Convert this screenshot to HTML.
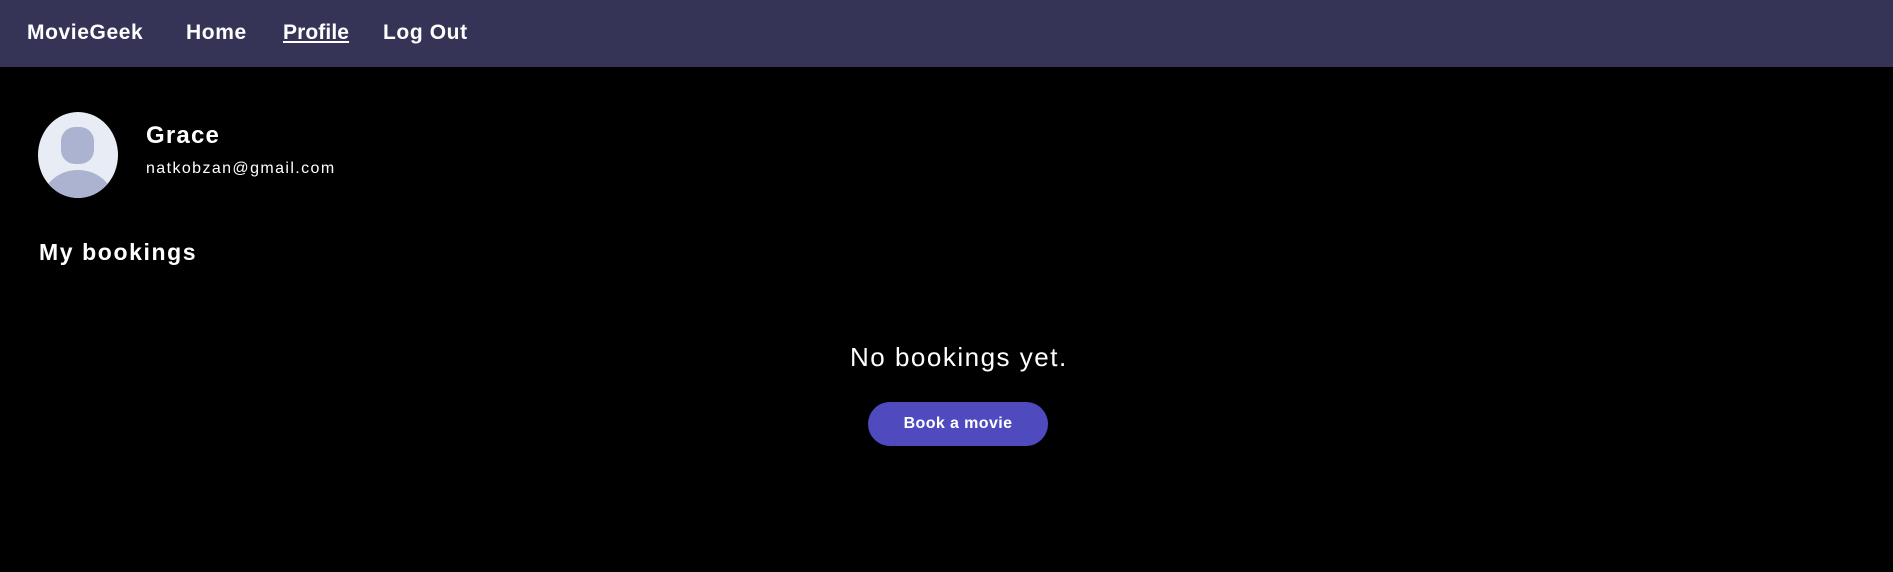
<!DOCTYPE html>
<html><head><meta charset="utf-8"><style>
*{margin:0;padding:0;box-sizing:border-box}
body{width:1893px;height:572px;background:#000;font-family:"Liberation Sans",sans-serif;color:#fff;position:relative;overflow:hidden}
.nav{position:absolute;left:0;top:0;width:1893px;height:67px;background:#363456}
.t{position:absolute;white-space:nowrap;line-height:1}
.n{font-size:21px;font-weight:bold;top:22px;letter-spacing:0.6px}
.btn{position:absolute;left:868px;top:402px;width:180px;height:44px;border-radius:22px;background:#4f4bbf;font-size:16px;font-weight:bold;text-align:center;line-height:44px;letter-spacing:0.4px}
</style></head><body>
<div class="nav"></div>
<div class="t n" style="left:27px">MovieGeek</div>
<div class="t n" style="left:186px">Home</div>
<div class="t n" style="left:283px;text-decoration:underline;letter-spacing:0.1px">Profile</div>
<div class="t n" style="left:383px">Log Out</div>
<svg style="position:absolute;left:38px;top:112px" width="80" height="86" viewBox="0 0 80 86">
<defs><clipPath id="c"><ellipse cx="40" cy="43" rx="40" ry="43"/></clipPath></defs>
<ellipse cx="40" cy="43" rx="40" ry="43" fill="#e8edf5"/>
<g clip-path="url(#c)" fill="#abb3d1">
<rect x="23" y="15" width="33" height="37" rx="14"/>
<ellipse cx="40" cy="90" rx="36" ry="32"/>
</g></svg>
<div class="t" style="left:146px;top:124px;font-size:24px;font-weight:bold;letter-spacing:1.2px">Grace</div>
<div class="t" style="left:146px;top:161px;font-size:16px;letter-spacing:1.4px">natkobzan@gmail.com</div>
<div class="t" style="left:39px;top:241px;font-size:23px;font-weight:bold;letter-spacing:1.6px">My bookings</div>
<div class="t" style="left:850px;top:344px;font-size:26px;letter-spacing:1.5px">No bookings yet.</div>
<div class="btn">Book a movie</div>
</body></html>
